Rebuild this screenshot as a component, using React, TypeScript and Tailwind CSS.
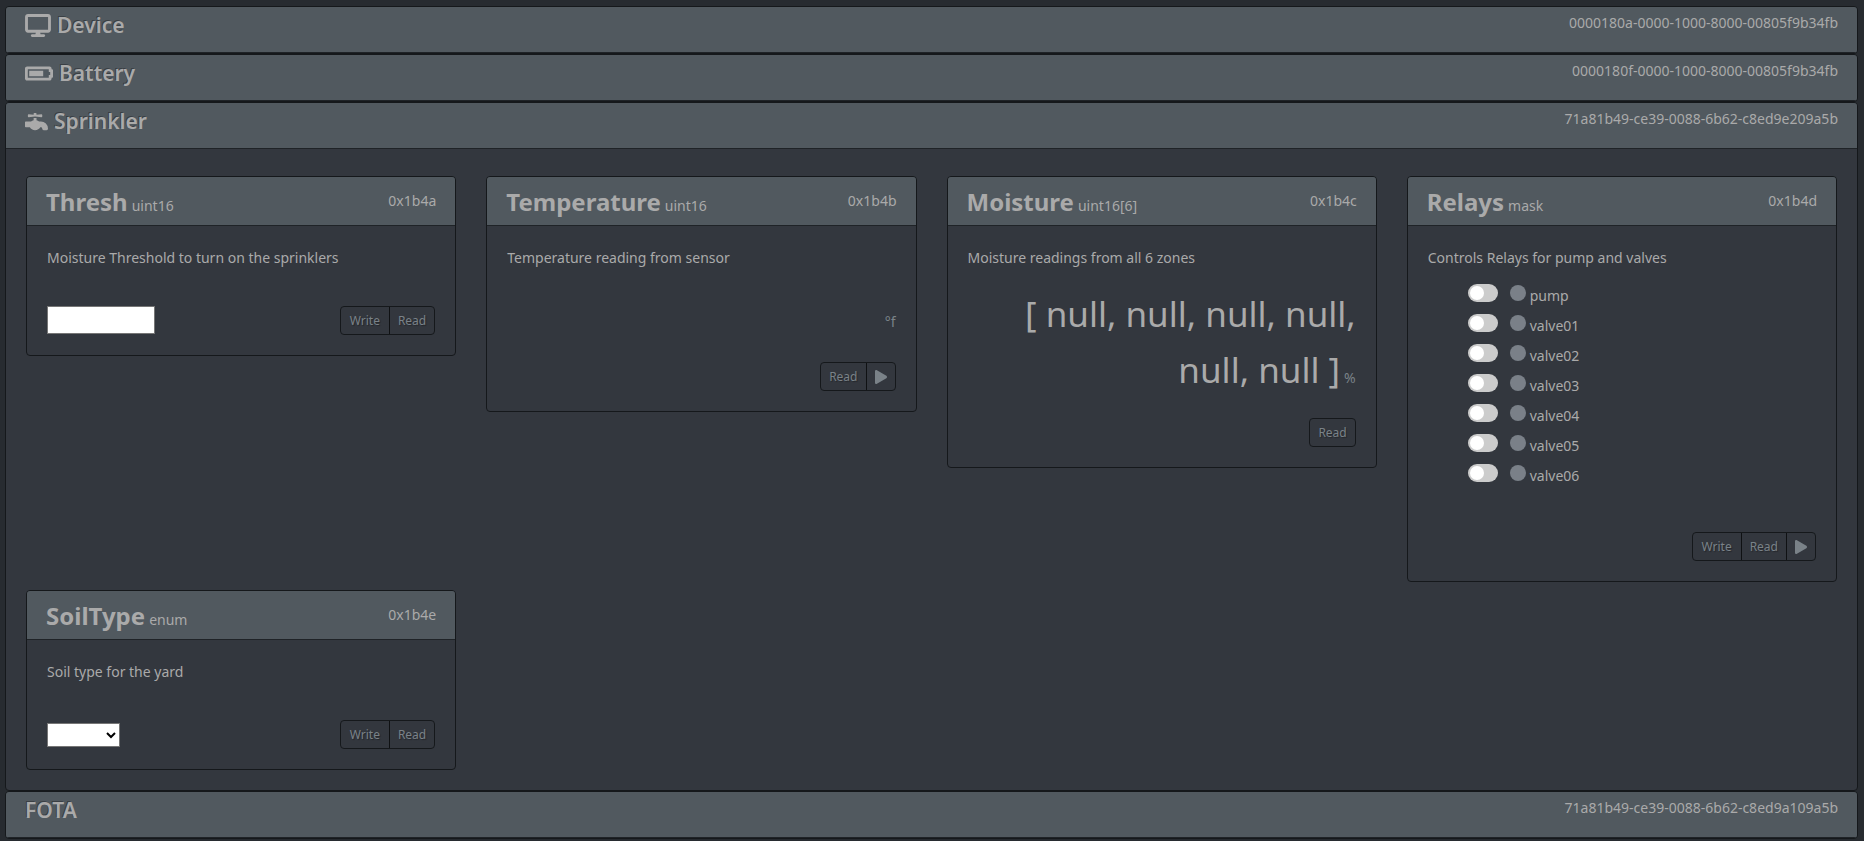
import type { ReactNode } from "react";
import { FaBatteryThreeQuarters, FaFaucet, FaPlay } from "react-icons/fa";
import { FaDisplay } from "react-icons/fa6";

function ServiceHeader({ title, uuid, icon }: { title: string; uuid: string; icon?: ReactNode }) {
  return (
    <header className="flex h-[46px] items-start justify-between border-b border-[#1f2327] bg-[#51595f] px-[19px]">
      <h2 className="flex h-9 items-center gap-[6px] text-[21px] leading-9 font-semibold [text-shadow:-1px_-1px_0_rgba(0,0,0,0.3)]">
        {icon}
        {title}
      </h2>
      <span className="text-[14px] leading-8">{uuid}</span>
    </header>
  );
}

function Service({ title, uuid, icon, children }: { title: string; uuid: string; icon?: ReactNode; children?: ReactNode }) {
  return (
    <section className="overflow-hidden rounded border border-[#15181b] bg-[#33373e]">
      <ServiceHeader title={title} uuid={uuid} icon={icon} />
      {children}
    </section>
  );
}

function Characteristic({ name, type, id, description, children }: { name: string; type: string; id: string; description: string; children: ReactNode }) {
  return (
    <article className="overflow-hidden rounded border border-[#15181b] bg-[#33373e]">
      <header className="flex h-[49px] items-start justify-between border-b border-[#1f2327] bg-[#51595f] px-[19px]">
        <h3 className="flex items-baseline gap-1 text-[24px] leading-[50px] font-bold">
          {name}
          <small className="text-[14px] font-normal">{type}</small>
        </h3>
        <span className="text-[14px] leading-[48px]">{id}</span>
      </header>
      <div className="p-5">
        <p className="text-[14px] leading-6">{description}</p>
        {children}
      </div>
    </article>
  );
}

function Actions({ write, play }: { write?: boolean; play?: boolean }) {
  const button =
    "flex h-[27px] items-center justify-center px-2 text-[12px] text-[#7a8288] [text-shadow:1px_1px_1px_rgba(0,0,0,0.3)]";
  return (
    <div className="flex shrink-0 divide-x divide-[#0f1113] rounded border border-[#15181b]">
      {write && <button type="button" className={`${button} min-w-[49px]`}>Write</button>}
      <button type="button" className={button}>Read</button>
      {play && (
        <button type="button" aria-label="Play" className={button}>
          <FaPlay className="h-[14px] w-3" preserveAspectRatio="none" />
        </button>
      )}
    </div>
  );
}

function Relay({ name }: { name: string }) {
  return (
    <li>
      <label className="flex h-[30px] items-start">
        <input type="checkbox" className="peer sr-only" />
        <span className="flex h-[18px] w-[30px] items-center rounded-full bg-[#ccc] px-[2px] peer-checked:justify-end peer-checked:bg-[#62c462]">
          <span className="size-[14px] rounded-full bg-white" />
        </span>
        <span className="mt-px ml-3 size-4 rounded-full bg-[#7a8088]" />
        <span className="ml-1 text-[14px] leading-6">{name}</span>
      </label>
    </li>
  );
}

const relays = ["pump", "valve01", "valve02", "valve03", "valve04", "valve05", "valve06"];

export default function App() {
  return (
    <main className="min-h-screen bg-[#272b30] pt-[6px] pr-[6px] pb-[2px] pl-[5px] font-['Noto_Sans',sans-serif] text-[#aaa]">
      <Service title="Device" uuid="0000180a-0000-1000-8000-00805f9b34fb" icon={<FaDisplay className="h-[23px] w-[26px]" />} />
      <Service title="Battery" uuid="0000180f-0000-1000-8000-00805f9b34fb" icon={<FaBatteryThreeQuarters className="h-[23px] w-[28px]" />} />
      <Service title="Sprinkler" uuid="71a81b49-ce39-0088-6b62-c8ed9e209a5b" icon={<FaFaucet className="h-[23px] w-[23px]" />}>
        <div className="grid grid-cols-4 items-start gap-x-[30px] gap-y-2 px-5 pt-[27px] pb-5">
          <Characteristic name="Thresh" type="uint16" id="0x1b4a" description="Moisture Threshold to turn on the sprinklers">
            <div className="mt-9 flex items-start justify-between">
              <input type="text" aria-label="Thresh" className="h-7 w-[108px] border border-[#767676] bg-white px-1 text-[14px] text-black" />
              <Actions write />
            </div>
          </Characteristic>
          <Characteristic name="Temperature" type="uint16" id="0x1b4b" description="Temperature reading from sensor">
            <div className="mt-4 text-right text-[35px] leading-[56px]">
              <small className="text-[14px] text-[#7a8288]">°f</small>
            </div>
            <div className="mt-3 flex justify-end">
              <Actions play />
            </div>
          </Characteristic>
          <Characteristic name="Moisture" type="uint16[6]" id="0x1b4c" description="Moisture readings from all 6 zones">
            <div className="mt-4 pl-9 text-right text-[35px] leading-[56px]">
              [ null, null, null, null, null, null ]<small className="ml-1 text-[14px] text-[#7a8288]">%</small>
            </div>
            <div className="mt-3 flex justify-end">
              <Actions />
            </div>
          </Characteristic>
          <Characteristic name="Relays" type="mask" id="0x1b4d" description="Controls Relays for pump and valves">
            <ul className="mt-[14px] pl-10">
              {relays.map((name) => (
                <Relay key={name} name={name} />
              ))}
            </ul>
            <div className="mt-[38px] flex justify-end">
              <Actions write play />
            </div>
          </Characteristic>
          <Characteristic name="SoilType" type="enum" id="0x1b4e" description="Soil type for the yard">
            <div className="mt-9 flex items-center justify-between">
              <select aria-label="SoilType" defaultValue="" className="h-6 w-[73px] border border-[#767676] bg-white text-[14px] text-black">
                <option value=""></option>
              </select>
              <Actions write />
            </div>
          </Characteristic>
        </div>
      </Service>
      <Service title="FOTA" uuid="71a81b49-ce39-0088-6b62-c8ed9a109a5b" />
    </main>
  );
}
